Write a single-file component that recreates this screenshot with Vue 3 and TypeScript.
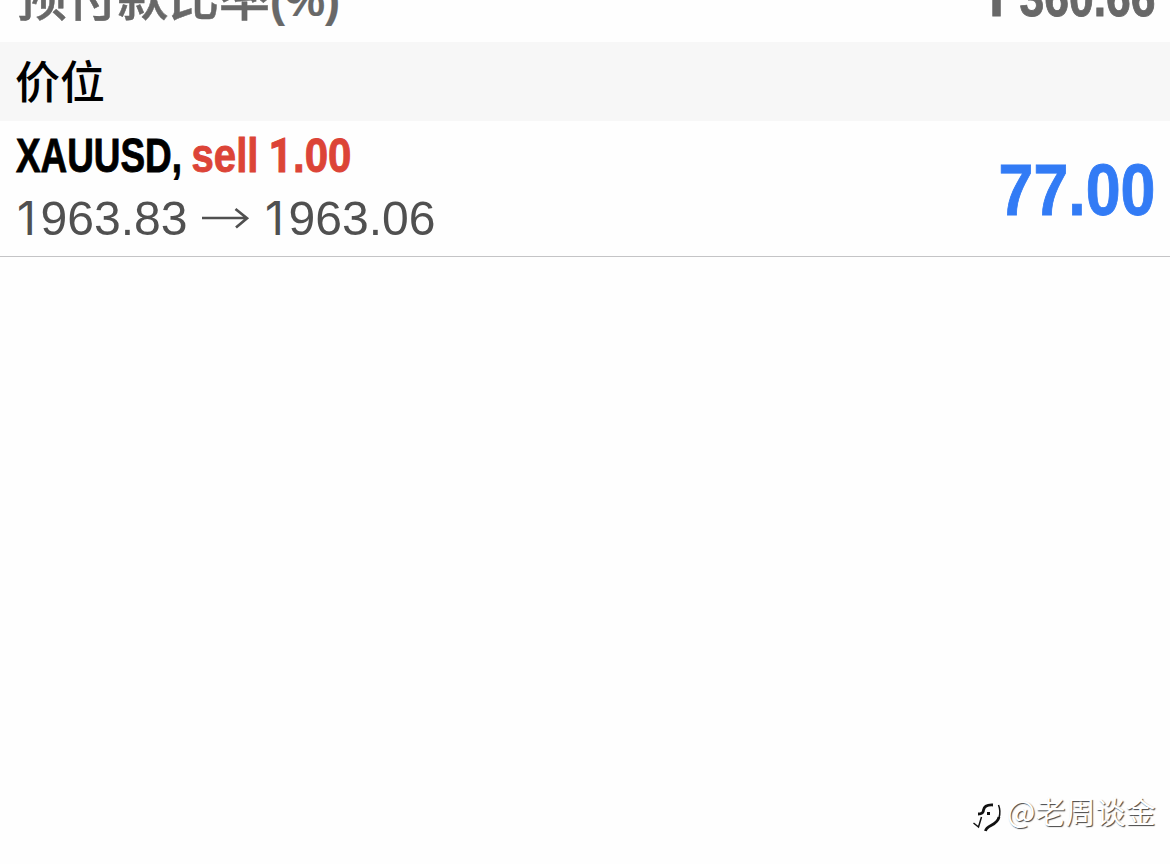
<script setup lang="ts">
interface Position {
  symbol: string
  side: string
  volume: string
  open: string
  current: string
  profit: string
}

const margin = { label: '预付款比率', unit: '(%)', value: '1 360.66' }
const position: Position = {
  symbol: 'XAUUSD,',
  side: 'sell',
  volume: '1.00',
  open: '1963.83',
  current: '1963.06',
  profit: '77.00',
}

const lead = (value: string): string => value.slice(0, 1)
const rest = (value: string): string => value.slice(1).trim()
</script>

<template>
  <main class="screen">
    <svg class="margin-row" width="1170" height="42" viewBox="0 0 1170 42">
      <text class="cjk margin-text" x="16" y="16" font-size="51" textLength="254">{{ margin.label }}</text>
      <text class="unit margin-text" x="270" y="16" font-size="46" textLength="70" lengthAdjust="spacingAndGlyphs">{{ margin.unit }}</text>
      <text class="bold margin-text" y="15.500" font-size="53"><tspan class="one" x="979.500">{{ lead(margin.value) }}</tspan>{{ ' ' }}<tspan x="1019.500" textLength="136" lengthAdjust="spacingAndGlyphs">{{ rest(margin.value) }}</tspan></text>
    </svg>
    <header class="section">价位</header>
    <svg class="position-row" width="1170" height="135" viewBox="0 0 1170 135">
      <text class="bold symbol" x="16" y="51" font-size="49" textLength="166" lengthAdjust="spacingAndGlyphs">{{ position.symbol }}</text>
      <text class="bold side" y="51" font-size="49"><tspan x="191.500" textLength="67" lengthAdjust="spacingAndGlyphs">{{ position.side }}</tspan>{{ ' ' }}<tspan class="one" x="268.500" font-size="47.500" textLength="24" lengthAdjust="spacingAndGlyphs">{{ lead(position.volume) }}</tspan><tspan x="293" textLength="58.500" lengthAdjust="spacingAndGlyphs">{{ rest(position.volume) }}</tspan></text>
      <text class="price" y="114" font-size="48.500"><tspan class="thin-one" x="17" font-size="46.500">{{ lead(position.open) }}</tspan><tspan x="40.500" textLength="147" lengthAdjust="spacingAndGlyphs">{{ rest(position.open) }}</tspan></text>
      <path class="arrow" d="M202 97H247M235.500 88L247 97.200L236 106.500" />
      <text class="price" y="114" font-size="48.500"><tspan class="thin-one" x="265" font-size="46.500">{{ lead(position.current) }}</tspan><tspan x="288.500" textLength="147" lengthAdjust="spacingAndGlyphs">{{ rest(position.current) }}</tspan></text>
      <text class="bold profit" x="998.500" y="94" font-size="72" textLength="157" lengthAdjust="spacingAndGlyphs">{{ position.profit }}</text>
    </svg>
    <footer class="watermark">
      <svg class="logo" width="32" height="36" viewBox="0 0 32 36">
        <path class="logo-fine" d="M1.500 26L6.500 30L9.500 20" />
        <path class="logo-bold" d="M21 8Q12.500 7.500 11.500 13Q11.500 17 6 17M15 16.500H18M13.500 34Q14 31 19 28.500Q26 25 27 20" />
        <path class="logo-fine" d="M26.500 8Q29 14 27 21" />
      </svg>
      <span class="author">@老周谈金</span>
    </footer>
  </main>
</template>

<style>
body {
  margin: 0;
  background: #fefefe;
}
</style>

<style scoped>
.screen {
  display: flex;
  flex-direction: column;
  width: 1170px;
  height: 864px;
  overflow: hidden;
  background: #fefefe;
  font-family: "Liberation Sans", "Noto Sans CJK SC", sans-serif;
}
svg {
  display: block;
  flex: none;
}
.cjk {
  font-family: "Noto Sans CJK SC", sans-serif;
  font-weight: 500;
  stroke-width: 0.5;
}
.unit {
  font-family: "Liberation Sans", sans-serif;
  font-weight: 700;
  stroke-width: 0.2;
}
.bold {
  font-family: "Liberation Sans", sans-serif;
  font-weight: 700;
  stroke-width: 0.9;
}
.one {
  font-family: Roboto, sans-serif;
}
.margin-text {
  fill: #686868;
  stroke: #686868;
}
.section {
  flex: none;
  box-sizing: border-box;
  height: 79px;
  padding-left: 15px;
  background: #f7f7f7;
  color: #000;
  font: 500 45px/76px "Noto Sans CJK SC", sans-serif;
}
.position-row {
  border-bottom: 1px solid #c4c4c6;
}
.symbol {
  fill: #000;
  stroke: #000;
}
.side {
  fill: #dc4437;
  stroke: #dc4437;
}
.price {
  font-family: "Liberation Sans", sans-serif;
  fill: #505050;
}
.thin-one {
  font-family: Inter, sans-serif;
}
.arrow {
  fill: none;
  stroke: #505050;
  stroke-width: 2.7;
}
.profit {
  fill: #327bf5;
  stroke: #327bf5;
}
.watermark {
  display: flex;
  align-items: center;
  margin-top: auto;
  margin-left: 972px;
  margin-bottom: 27px;
  height: 44px;
  color: #fff;
  font: 400 30px/44px "Noto Sans CJK SC", sans-serif;
  text-shadow: 1px 1px 1px #444;
  white-space: nowrap;
}
.author {
  margin-top: -10px;
  margin-left: 3px;
}
.logo-fine,
.logo-bold {
  fill: none;
  stroke: #111;
}
.logo-fine {
  stroke-width: 1.5;
}
.logo-bold {
  stroke-width: 2.8;
}
</style>
